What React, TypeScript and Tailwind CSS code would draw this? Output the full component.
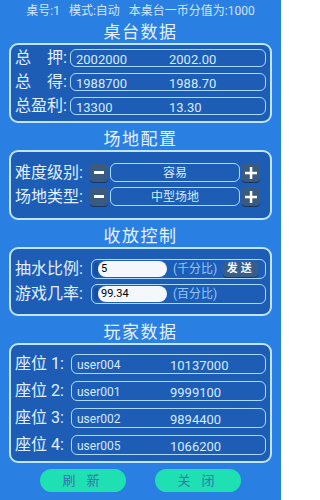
import React from 'react';

const FONT = "font-['Roboto','Noto_Sans_CJK_SC',sans-serif]";

// section heading that sits above each panel
function Title({ text, first }: { text: string; first?: boolean }) {
  return (
    <div className={`flex justify-center items-end ${first ? 'h-[23px]' : 'h-[27px]'} pb-[1px]`}>
      <span className="text-[17px] leading-[20px] tracking-[1.5px] text-[#e4f2ff]">{text}</span>
    </div>
  );
}

function Panel({ children, className = '' }: { children: React.ReactNode; className?: string }) {
  return (
    <div className={`mx-[9px] rounded-[9px] border-2 border-[#bfe5ff] bg-[#1d5db6] ${className}`}>
      {children}
    </div>
  );
}

function Field({ left, right, h = 'h-[18px]', small }: { left: string; right: string; h?: string; small?: boolean }) {
  return (
    <div className={`flex-1 flex items-center ${h} rounded-[6px] border-[1.5px] border-[#a9dbff] pl-[5px] text-[#d6ebff] ${small ? 'text-[12px]' : 'text-[13px]'} leading-none pt-[2px]`}>
      <span className="w-[93px]">{left}</span>
      <span className="text-[13px]">{right}</span>
    </div>
  );
}

function StepBtn({ sign }: { sign: '-' | '+' }) {
  return (
    <div className="w-[18px] h-[19px] rounded-[4px] bg-[#3b5a82] flex items-center justify-center shadow-[0_1px_0_#16345e]">
      {sign === '-' ? (
        <div className="w-[10px] h-[2.5px] bg-white" />
      ) : (
        <svg width="12" height="12" viewBox="0 0 12 12">
          <rect x="0" y="4.8" width="12" height="2.5" fill="#fff" />
          <rect x="4.8" y="0" width="2.5" height="12" fill="#fff" />
        </svg>
      )}
    </div>
  );
}

const totals = [
  { label: '总　押:', a: '2002000', b: '2002.00' },
  { label: '总　得:', a: '1988700', b: '1988.70' },
  { label: '总盈利:', a: '13300', b: '13.30' },
];

const seats = [
  { seat: '座位 1:', user: 'user004', coins: '10137000' },
  { seat: '座位 2:', user: 'user001', coins: '9999100' },
  { seat: '座位 3:', user: 'user002', coins: '9894400' },
  { seat: '座位 4:', user: 'user005', coins: '1066200' },
];

export default function App() {
  return (
    <div className={`w-[281px] h-[500px] bg-[#2a7fe3] overflow-hidden ${FONT}`}>
      {/* top info line */}
      <div className="h-[20px] flex items-center justify-center text-[12px] text-[#cfe6ff] gap-[9px] pt-[1px]">
        <span>桌号:1</span>
        <span>模式:自动</span>
        <span>本桌台一币分值为:1000</span>
      </div>

      <Title text="桌台数据" first />
      <Panel className="h-[80px] px-[4px] pt-[4px] flex flex-col gap-[6px]">
        {totals.map((r) => (
          <div key={r.label} className="flex items-center">
            <span className="w-[55px] text-[16px] leading-[18px] text-[#e0f0ff] whitespace-nowrap">{r.label}</span>
            <Field left={r.a} right={r.b} />
          </div>
        ))}
      </Panel>

      <Title text="场地配置" />
      <Panel className="h-[70px] px-[4px] pt-[11px] flex flex-col gap-[5px]">
        {[
          { label: '难度级别:', value: '容易' },
          { label: '场地类型:', value: '中型场地' },
        ].map((r) => (
          <div key={r.label} className="flex items-center pr-[6px]">
            <span className="w-[75px] text-[16px] leading-[19px] text-[#e0f0ff] whitespace-nowrap">{r.label}</span>
            <StepBtn sign="-" />
            <div className="flex-1 mx-[2px] h-[19px] rounded-[6px] border-[1.5px] border-[#a9dbff] flex items-center justify-center text-[12px] text-[#d6ebff]">
              {r.value}
            </div>
            <StepBtn sign="+" />
          </div>
        ))}
      </Panel>

      <Title text="收放控制" />
      <Panel className="h-[69px] px-[4px] pt-[10px] flex flex-col gap-[5px]">
        {[
          { label: '抽水比例:', value: '5', unit: '(千分比)', send: true },
          { label: '游戏几率:', value: '99.34', unit: '(百分比)', send: false },
        ].map((r) => (
          <div key={r.label} className="flex items-center">
            <span className="w-[76px] text-[16px] leading-[20px] text-[#e0f0ff] whitespace-nowrap">{r.label}</span>
            <div className="flex-1 h-[20px] rounded-[6px] border-[1.5px] border-[#a9dbff] flex items-center pl-[2px]">
              <div className="w-[4px] h-[14px] rounded-l-full bg-[#174f9e]" />
              <div className="w-[69px] h-[16px] rounded-full bg-[#f4f8fc] flex items-center pl-[3px] text-[11px] text-black">
                {r.value}
              </div>
              <span className="ml-[6px] text-[12px] text-[#8fc8ff]">{r.unit}</span>
              {r.send && (
                <div className="ml-[6px] w-[35px] h-[16px] rounded-[4px] bg-[#3a5c88] flex items-center justify-center text-[11px] font-bold text-[#eef6ff] tracking-[3px] shadow-[0_1px_0_#173661]">
                  发送
                </div>
              )}
            </div>
          </div>
        ))}
      </Panel>

      <Title text="玩家数据" />
      <Panel className="h-[120px] px-[4px] pt-[9px] flex flex-col gap-[7px]">
        {seats.map((s) => (
          <div key={s.seat} className="flex items-center">
            <span className="w-[56px] text-[16px] leading-[20px] text-[#e0f0ff] whitespace-nowrap">{s.seat}</span>
            <Field left={s.user} right={s.coins} h="h-[20px]" small />
          </div>
        ))}
      </Panel>

      {/* bottom actions */}
      <div className="flex justify-center gap-[29px] pt-[6px]">
        {['刷 新', '关 闭'].map((t) => (
          <button
            key={t}
            className="w-[86px] h-[23px] rounded-full bg-[#1ee0b2] text-[13px] text-[#3b6fb5] tracking-[4px] flex items-center justify-center"
          >
            {t}
          </button>
        ))}
      </div>
    </div>
  );
}
